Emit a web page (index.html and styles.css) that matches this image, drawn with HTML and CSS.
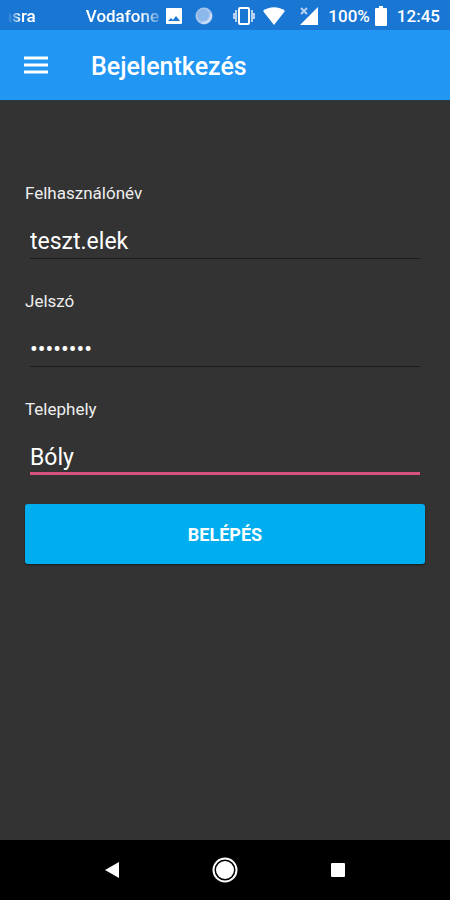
FILE: index.html
```
<!DOCTYPE html>
<html lang="hu">
<head>
    <meta charset="UTF-8">
    <meta name="viewport" content="width=device-width, initial-scale=1.0">
    <title>Bejelentkezés</title>
    <link rel="stylesheet" href="styles.css">
</head>
<body>

<div class="status-bar">
    <div class="carrier"><span>asra</span><span>Vodafone</span></div>
    <div class="status-icons">
        <svg class="icon-picture" width="18" height="18" viewBox="0 0 18 18">
            <path fill="#fff" fill-rule="evenodd" d="M2 1h14q1 0 1 1v14q0 1-1 1H2q-1 0-1-1V2q0-1 1-1zM3 14h12l-4-5-3 4-2-2z"/>
        </svg>
        <svg class="icon-sync" width="18" height="18" viewBox="0 0 18 18">
            <circle cx="9" cy="9" r="8.5" fill="#a5c6ef"/>
            <circle cx="8" cy="8" r="6" fill="#8db8eb"/>
            <path fill="none" stroke="#c9def6" stroke-width="2" d="M16 7a8 8 0 0 1-9 9"/>
        </svg>
        <svg class="icon-vibrate" width="22" height="20" viewBox="0 0 22 20">
            <rect x="6" y="2" width="10" height="16" rx="1" fill="none" stroke="#fff" stroke-width="2"/>
            <path fill="none" stroke="#b5d2f2" stroke-width="2" d="M3 4v12M19 4v12M1 7v6M21 7v6"/>
        </svg>
        <svg class="icon-wifi" width="22" height="18" viewBox="0 0 22 18">
            <path fill="#fff" d="M11 18L0 4C6-1 16-1 22 4z"/>
        </svg>
        <svg class="icon-signal" width="18" height="18" viewBox="0 0 18 18">
            <path fill="#fff" d="M18 0v18H0z"/>
            <path stroke="#b5d2f2" stroke-width="2" d="M1 1l6 6M7 1L1 7"/>
        </svg>
        <span class="percent">100%</span>
        <svg class="icon-battery" width="12" height="20" viewBox="0 0 12 20">
            <path fill="#fff" d="M4 0h4v2h3q1 0 1 1v16q0 1-1 1H1q-1 0-1-1V3q0-1 1-1h3z"/>
        </svg>
        <span class="clock">12:45</span>
    </div>
</div>

<header class="toolbar">
    <button class="menu-button" type="button" aria-label="Menü">
        <svg width="24" height="18" viewBox="0 0 24 18">
            <path stroke="#fff" stroke-width="3" d="M0 2h24M0 9h24M0 16h24"/>
        </svg>
    </button>
    <h1>Bejelentkezés</h1>
</header>

<main>
    <form class="login-form">
        <div class="field">
            <label for="username">Felhasználónév</label>
            <input type="text" id="username" value="teszt.elek">
        </div>
        <div class="field">
            <label for="password">Jelszó</label>
            <input type="password" id="password" value="jelszo12">
        </div>
        <div class="field active">
            <label for="site">Telephely</label>
            <input type="text" id="site" value="Bóly">
        </div>
        <button class="login-button" type="button">BELÉPÉS</button>
    </form>
</main>

<nav class="nav-bar">
    <button type="button" aria-label="Vissza">
        <svg width="14" height="16" viewBox="0 0 14 16">
            <path fill="#fff" d="M14 0v16L0 8z"/>
        </svg>
    </button>
    <button type="button" aria-label="Kezdőlap">
        <svg width="26" height="26" viewBox="0 0 26 26">
            <circle cx="13" cy="13" r="11.5" fill="none" stroke="#fff" stroke-width="2"/>
            <circle cx="13" cy="13" r="9" fill="#fff"/>
        </svg>
    </button>
    <button type="button" aria-label="Áttekintés">
        <svg width="14" height="14" viewBox="0 0 14 14">
            <rect width="14" height="14" rx="1" fill="#fff"/>
        </svg>
    </button>
</nav>

</body>
</html>
```
FILE: styles.css
```
* {
    box-sizing: border-box;
}
body {
    margin: 0;
    min-height: 100vh;
    display: flex;
    flex-direction: column;
    font-family: Roboto, "Liberation Sans", sans-serif;
    background-color: #333;
    color: #fff;
}
svg {
    display: block;
    flex-shrink: 0;
}
button {
    font-family: inherit;
    color: inherit;
    border: none;
    padding: 0;
    cursor: pointer;
}

/* Status bar */
.status-bar {
    height: 30px;
    padding: 2px 10px 0 3px;
    display: flex;
    align-items: center;
    justify-content: space-between;
    background-color: #1976d2;
    font-size: 17px;
    font-weight: 500;
}
.carrier {
    display: flex;
    gap: 50px;
    white-space: nowrap;
    -webkit-mask-image: linear-gradient(to right, transparent 5px, #000 18px, #000 calc(100% - 18px), rgba(0, 0, 0, 0.3));
    mask-image: linear-gradient(to right, transparent 5px, #000 18px, #000 calc(100% - 18px), rgba(0, 0, 0, 0.3));
}
.status-icons {
    display: flex;
    align-items: center;
}
.icon-sync {
    margin-left: 12px;
}
.icon-vibrate {
    margin-left: 20px;
}
.icon-wifi {
    margin-left: 8px;
}
.icon-signal {
    margin-left: 15px;
}
.percent {
    margin-left: 10px;
}
.icon-battery {
    margin-left: 5px;
}
.clock {
    margin-left: 10px;
}

/* Toolbar */
.toolbar {
    height: 71px;
    padding: 0 24px;
    display: flex;
    align-items: center;
    gap: 43px;
    background-color: #2196f3;
    border-bottom: 1px solid #263a48;
}
.menu-button {
    background: none;
}
.toolbar h1 {
    margin: 2px 0 0;
    font-size: 25px;
    font-weight: 500;
}

/* Login form */
main {
    flex: 1;
    padding: 80px 25px 30px;
}
.login-form {
    display: flex;
    flex-direction: column;
}
.field {
    display: flex;
    flex-direction: column;
    margin-bottom: 30px;
}
.field label {
    font-size: 17px;
    line-height: 24px;
    color: #eee;
}
.field input {
    height: 54px;
    margin: 0 5px;
    padding: 20px 0 0;
    border: none;
    border-bottom: 1px solid #1c1c1c;
    outline: none;
    background: none;
    font-family: inherit;
    font-size: 23px;
    color: #fff;
}
.field.active {
    margin-bottom: 29px;
}
.field.active input {
    padding-top: 22px;
    border-bottom: 3px solid #d8507e;
}
.login-button {
    height: 60px;
    border-radius: 3px;
    background-color: #00aeef;
    box-shadow: 0 1px 2px rgba(0, 0, 0, 0.5);
    font-size: 18px;
    font-weight: 700;
}

/* Navigation bar */
.nav-bar {
    height: 60px;
    padding: 0 56px;
    display: flex;
    align-items: center;
    background-color: #000;
}
.nav-bar button {
    flex: 1;
    height: 60px;
    display: flex;
    align-items: center;
    justify-content: center;
    background: none;
}
```
